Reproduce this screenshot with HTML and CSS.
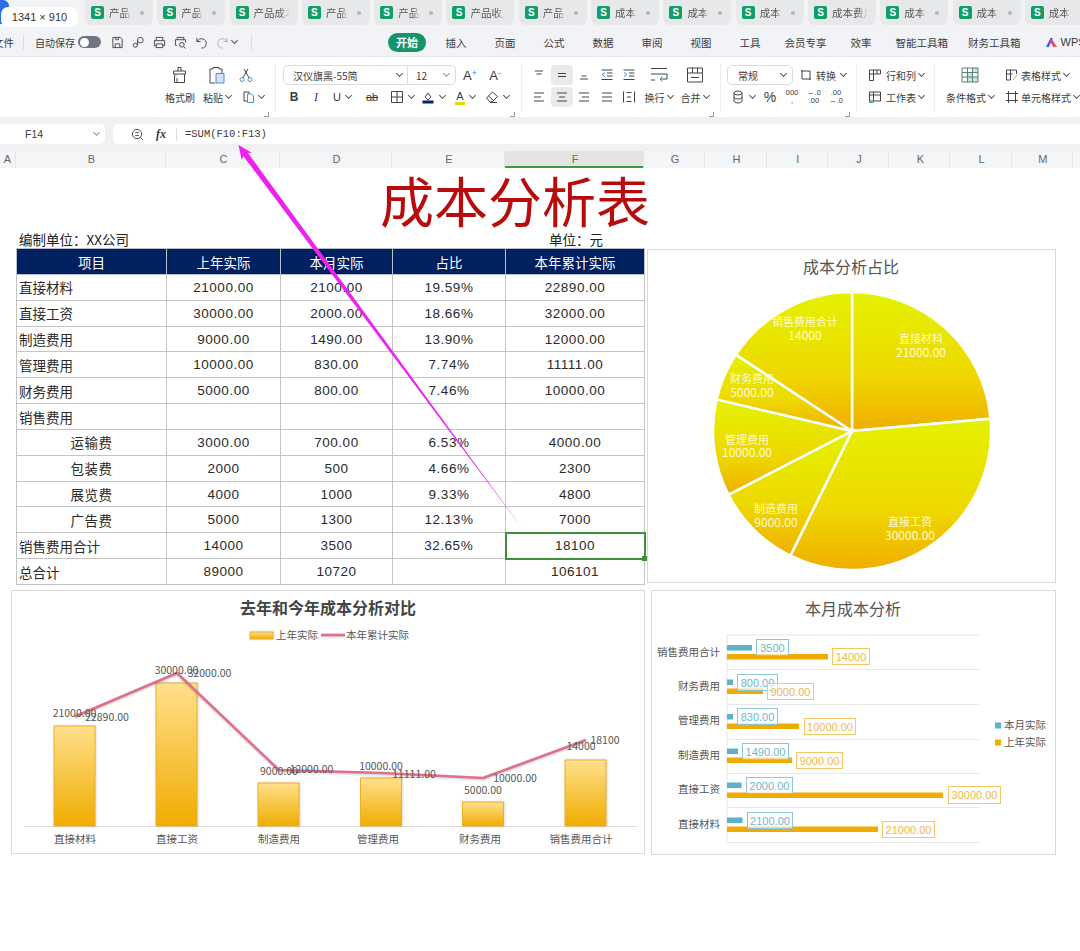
FILE: index.html
```html
<!DOCTYPE html>
<html lang="zh-CN">
<head>
  <meta charset="UTF-8"/>
  <title>成本分析表</title>
  <link rel="stylesheet" href="styles.css">
</head>
<body>
  <!-- TABS -->
  <div class="tabbar">
    <div class="chip">1341 × 910</div>
    <div class="tab"><b>S</b><span>产品成</span><i></i></div>
    <div class="tab"><b>S</b><span>产品成</span><i></i></div>
    <div class="tab"><b>S</b><span class="long">产品成本分</span></div>
    <div class="tab"><b>S</b><span>产品成</span><i></i></div>
    <div class="tab"><b>S</b><span>产品成</span><i></i></div>
    <div class="tab"><b>S</b><span class="long">产品收入分</span></div>
    <div class="tab"><b>S</b><span>产品成</span><i></i></div>
    <div class="tab"><b>S</b><span>成本分</span><i></i></div>
    <div class="tab"><b>S</b><span>成本分</span><i></i></div>
    <div class="tab"><b>S</b><span>成本分</span><i></i></div>
    <div class="tab"><b>S</b><span class="long">成本费用分</span></div>
    <div class="tab"><b>S</b><span>成本分</span><i></i></div>
    <div class="tab"><b>S</b><span>成本分</span><i></i></div>
    <div class="tab"><b>S</b><span>成本分</span><i></i></div>
  </div>

  <!-- MENU -->
  <div class="menubar">
    <div class="quick">
      <span class="file">文件</span>
      <span class="vline"></span>
      <span class="autosave">自动保存</span>
      <span class="toggle"></span>
      <svg class="ic qa" viewBox="0 0 14 14"><path d="M2 1.500h8l2 2v9H2zM4.500 12.500v-4h5v4M5 1.500v2.500h3v-2.500"/></svg>
      <svg class="ic qa" viewBox="0 0 14 14"><circle cx="9" cy="4.500" r="3"/><circle cx="3.500" cy="10" r="2.200"/><path d="M6 4.500v5.500"/></svg>
      <svg class="ic qa" viewBox="0 0 14 14"><path d="M3.500 5V1.500h7V5M3.500 10.500H1.500V5h11v5.500h-2M3.500 8.500h7v4h-7z"/></svg>
      <svg class="ic qa" viewBox="0 0 14 14"><path d="M3.500 4V1.500h7V4M3 10H1.500V4h11v3"/><circle cx="8.500" cy="9.500" r="2.500"/><path d="M10.500 11.500l2 2"/></svg>
      <svg class="ic qa" viewBox="0 0 14 14"><path d="M2 2v4h4M2.500 6A5 5 0 1 1 7 13"/></svg>
      <svg class="ic qa dim" viewBox="0 0 14 14"><path d="M12 2v4H8M11.500 6A5 5 0 1 0 7 13"/></svg>
      <span class="chev qa-chev"></span>
      <span class="vline last"></span>
    </div>
    <span class="pill">开始</span>
    <nav class="menu">
      <a>插入</a><a>页面</a><a>公式</a><a>数据</a><a>审阅</a><a>视图</a><a>工具</a>
      <a class="wide">会员专享</a><a>效率</a><a class="wide">智能工具箱</a><a class="wide">财务工具箱</a>
    </nav>
    <span class="vline end"></span>
    <svg class="wps" viewBox="0 0 14 12"><path d="M1 11L6 1h2.500L4 11z" fill="#3b5bf0"/><path d="M5 4l4 7h3.500L8 3z" fill="#e83e8c"/><path d="M9 11h4l-1.500-3z" fill="#f0653c"/></svg>
    <span class="wf">WPS AI</span>
  </div>

  <!-- RIBBON -->
  <div class="ribbon">
    <div class="group g-clip">
      <div class="big c1">
        <svg class="ic i20" viewBox="0 0 20 20"><path d="M8 6V2.500h3V6M3.500 6h12v3h-12zM4.500 9v8.500h10V9M7 17.500V13"/><path d="M4 11h3" stroke="#e8973c"/></svg>
      </div>
      <div class="big c2">
        <svg class="ic i20" viewBox="0 0 20 20"><path d="M3 4h3V2.500h6V4h3v4M8 18H3V4"/><path d="M9 8.500h8V18H9z" stroke="#4a90d9" fill="#cfe3f7"/></svg>
      </div>
      <div class="big c3">
        <svg class="ic i16 blue" viewBox="0 0 16 16"><circle cx="4" cy="12.500" r="2"/><circle cx="12" cy="12.500" r="2"/><path d="M5 10.800L10 2M11 10.800L6 2" stroke="#444"/></svg>
      </div>
      <div class="lbl c1">格式刷</div>
      <div class="lbl c2">粘贴<span class="chev"></span></div>
      <div class="lbl c3">
        <svg class="ic i14" viewBox="0 0 14 14"><path d="M2 2h5v9H2z"/><path d="M5.500 4h4l2 2v6.500h-6z" stroke="#4a90d9" fill="#fff"/></svg><span class="chev"></span>
      </div>
      <span class="launch"></span>
    </div>

    <div class="group g-font">
      <div class="r">
        <div class="sel font"><span>汉仪旗黑-55简</span><span class="chev"></span></div>
        <div class="sel size"><span>12</span><span class="chev light"></span></div>
        <span class="tool t-a">A<sup>+</sup></span>
        <span class="tool t-a">A<sup>-</sup></span>
      </div>
      <div class="r">
        <span class="tool w22 bold">B</span>
        <span class="tool w22 ital">I</span>
        <span class="tool w30 und">U<span class="chev"></span></span>
        <span class="tool w30 strike">ab</span>
        <span class="tool w30"><svg class="ic i14" viewBox="0 0 14 14"><path d="M1.500 1.500h11v11h-11zM7 1.500v11M1.500 7h11"/></svg><span class="chev"></span></span>
        <span class="tool w32"><svg class="i14" viewBox="0 0 14 14"><path class="ic-line" d="M4 7l3-4 3 4-3 3z"/><rect x="1.500" y="10.500" width="11" height="3" fill="#002060"/></svg><span class="chev"></span></span>
        <span class="tool w32"><span class="under-a">A</span><span class="chev"></span></span>
        <span class="tool w32"><svg class="ic i14" viewBox="0 0 14 14"><path d="M5 12L1.500 8 7.500 2l5 4.500L7 12zM3.500 6l5 4.500M5 12.500h7"/></svg><span class="chev"></span></span>
      </div>
      <span class="launch"></span>
    </div>

    <div class="group g-align">
      <div class="r">
        <span class="tool w225"><svg class="ic i14" viewBox="0 0 14 14"><path d="M3 3h8M4.500 6h5"/></svg></span>
        <span class="tool w225 on"><svg class="ic i14" viewBox="0 0 14 14"><path d="M3 5.500h8M3 8.500h8"/></svg></span>
        <span class="tool w225"><svg class="ic i14" viewBox="0 0 14 14"><path d="M4.500 8h5M3 11h8"/></svg></span>
        <span class="tool w225"><svg class="ic i14" viewBox="0 0 14 14"><path d="M1.500 2h11M7 5h5.500M7 8h5.500M1.500 11.500h11"/><path d="M5 4.500L2 6.500l3 2" stroke="#4a90d9"/></svg></span>
        <span class="tool w225"><svg class="ic i14" viewBox="0 0 14 14"><path d="M1.500 2h11M7 5h5.500M7 8h5.500M1.500 11.500h11"/><path d="M2 4.500l3 2-3 2" stroke="#4a90d9"/></svg></span>
        <span class="tool w36"><svg class="ic i20" viewBox="0 0 20 20"><path d="M2 3.500h16M2 9h16v5h-6M2 15h4"/><path d="M13.500 11.500L11 14l2.500 2.500" stroke="#2fa37a"/></svg></span>
        <span class="tool w36"><svg class="ic i20" viewBox="0 0 20 20"><path d="M2.500 3h15v14h-15zM7.500 3v5M12.500 3v5M2.500 8h15M6 12.500h8"/></svg></span>
      </div>
      <div class="r">
        <span class="tool w225"><svg class="ic i14" viewBox="0 0 14 14"><path d="M2 3h10M2 7h7M2 11h10"/></svg></span>
        <span class="tool w225 on"><svg class="ic i14" viewBox="0 0 14 14"><path d="M2 3h10M4 7h6M2 11h10"/></svg></span>
        <span class="tool w225"><svg class="ic i14" viewBox="0 0 14 14"><path d="M2 3h10M5 7h7M2 11h10"/></svg></span>
        <span class="tool w225"><svg class="ic i14" viewBox="0 0 14 14"><path d="M2 3h10M2 7h10M2 11h10"/></svg></span>
        <span class="tool w225"><svg class="ic i14" viewBox="0 0 14 14"><path d="M1.500 1.500v11M12.500 1.500v11M4.500 2.500h5M4.500 11.500h5M5 7h4"/></svg></span>
        <span class="tool w36 txt">换行<span class="chev"></span></span>
        <span class="tool w36 txt">合并<span class="chev"></span></span>
      </div>
      <span class="launch"></span>
    </div>

    <div class="group g-num">
      <div class="r">
        <div class="sel fmt"><span>常规</span><span class="chev"></span></div>
        <span class="tool conv"><svg class="ic i14" viewBox="0 0 14 14"><path d="M3 2v9h9M11 12V3H2"/></svg>转换<span class="chev"></span></span>
      </div>
      <div class="r">
        <span class="tool w32"><svg class="ic i14" viewBox="0 0 14 14"><ellipse cx="7" cy="3" rx="4" ry="2"/><path d="M3 3v8c0 2.600 8 2.600 8 0V3M3 7c0 2.600 8 2.600 8 0"/></svg><span class="chev"></span></span>
        <span class="tool w22 pct">%</span>
        <span class="tool w22 tiny">000<br>,</span>
        <span class="tool w22 tiny">←.0<br>.00</span>
        <span class="tool w22 tiny">.00<br>→.0</span>
      </div>
      <span class="launch"></span>
    </div>

    <div class="group g-rows">
      <div class="r"><svg class="ic i14" viewBox="0 0 14 14"><path d="M1.500 2h11v4h-7v6.500h-4zM1.500 6h4M5.500 2v4M9 2v4"/></svg><span class="t">行和列</span><span class="chev"></span></div>
      <div class="r"><svg class="ic i14" viewBox="0 0 14 14"><path d="M1.500 2h11v9h-11zM1.500 5h11M5.500 2v9"/><path d="M1.500 11v1.500h4" stroke="#2fa37a"/></svg><span class="t">工作表</span><span class="chev"></span></div>
    </div>

    <div class="group g-cond">
      <div class="big">
        <svg class="ic i20 slate" viewBox="0 0 20 20"><path d="M7.500 7.500h5V12h5.500v5H7.500zM12.500 3H18v4.500h-5.500z" fill="#bfeadb" stroke="none"/><path d="M2 3h16v14H2zM2 7.500h16M2 12h16M7.500 3v14M12.500 3v14"/></svg>
      </div>
      <div class="r"><svg class="ic i14" viewBox="0 0 14 14"><path d="M1.500 2h10v4M1.500 2v10h4M1.500 6h6M5.500 2v10"/><path d="M8 12l4-5" stroke="#e8973c"/></svg><span class="t">表格样式</span><span class="chev"></span></div>
      <div class="lbl">条件格式<span class="chev"></span></div>
      <div class="r"><svg class="ic i14" viewBox="0 0 14 14"><path d="M3.500 1v12M10.500 1v12M1 3.500h12M1 10.500h12"/></svg><span class="t">单元格样式</span><span class="chev"></span></div>
    </div>
  </div>

  <!-- FORMULA BAR -->
  <div class="formula">
    <div class="namebox"><span>F14</span><span class="chev light"></span></div>
    <div class="fbox">
      <svg class="ic zoomi" viewBox="0 0 14 14"><circle cx="6.500" cy="6.500" r="5"/><path d="M10 10l3 3M4.500 5h4M4.500 8h4"/></svg>
      <span class="fx">fx</span>
      <span class="fdiv"></span>
      <span class="ftext">=SUM(F10:F13)</span>
    </div>
  </div>

  <!-- COLUMN HEADERS -->
  <div class="cols">
    <span class="c-a">A</span><span class="c-b">B</span><span class="c-c">C</span><span class="c-d">D</span><span class="c-e">E</span><span class="c-f">F</span>
    <span class="c-n">G</span><span class="c-n">H</span><span class="c-n">I</span><span class="c-n">J</span><span class="c-n">K</span><span class="c-n">L</span><span class="c-n">M</span>
  </div>

  <!-- SHEET -->
  <div class="sheet">
    <h1>成本分析表</h1>
    <div class="meta"><span>编制单位：XX公司</span><span>单位：元</span></div>

    <div class="top-row">
      <table class="cost">
        <thead>
          <tr><th class="col-b">项目</th><th class="col-c">上年实际</th><th class="col-d">本月实际</th><th class="col-e">占比</th><th class="col-f">本年累计实际</th></tr>
        </thead>
        <tbody>
          <tr><td class="name">直接材料</td><td>21000.00</td><td>2100.00</td><td>19.59%</td><td>22890.00</td></tr>
          <tr><td class="name">直接工资</td><td>30000.00</td><td>2000.00</td><td>18.66%</td><td>32000.00</td></tr>
          <tr><td class="name">制造费用</td><td>9000.00</td><td>1490.00</td><td>13.90%</td><td>12000.00</td></tr>
          <tr><td class="name">管理费用</td><td>10000.00</td><td>830.00</td><td>7.74%</td><td>11111.00</td></tr>
          <tr><td class="name">财务费用</td><td>5000.00</td><td>800.00</td><td>7.46%</td><td>10000.00</td></tr>
          <tr><td class="name">销售费用</td><td></td><td></td><td></td><td></td></tr>
          <tr><td>运输费</td><td>3000.00</td><td>700.00</td><td>6.53%</td><td>4000.00</td></tr>
          <tr><td>包装费</td><td>2000</td><td>500</td><td>4.66%</td><td>2300</td></tr>
          <tr><td>展览费</td><td>4000</td><td>1000</td><td>9.33%</td><td>4800</td></tr>
          <tr><td>广告费</td><td>5000</td><td>1300</td><td>12.13%</td><td>7000</td></tr>
          <tr><td class="name">销售费用合计</td><td>14000</td><td>3500</td><td>32.65%</td><td class="active">18100</td></tr>
          <tr><td class="name">总合计</td><td>89000</td><td>10720</td><td></td><td>106101</td></tr>
        </tbody>
      </table>

      <div class="card pie-card">
        <svg viewBox="647 250 409 334" width="409" height="334">
          <defs>
            <linearGradient id="pieFill" x1="0" y1="0" x2="0" y2="1">
              <stop offset="0" stop-color="#e4f200"/><stop offset=".6" stop-color="#eed800"/><stop offset="1" stop-color="#f0ae00"/>
            </linearGradient>
            <linearGradient id="barFill" x1="0" y1="0" x2="0" y2="1">
              <stop offset="0" stop-color="#ffe08c"/><stop offset="1" stop-color="#f0ac00"/>
            </linearGradient>
          </defs>
          <text class="ctitle" x="851" y="268">成本分析占比</text>
          <g class="slices">
            <path d="M852 432L852 293A139 139 0 0 1 990.500 419.700Z"/>
            <path d="M852 432L990.500 419.700A139 139 0 0 1 790.400 556.600Z"/>
            <path d="M852 432L790.400 556.600A139 139 0 0 1 728.500 495.700Z"/>
            <path d="M852 432L728.500 495.700A139 139 0 0 1 716.600 400.400Z"/>
            <path d="M852 432L716.600 400.400A139 139 0 0 1 735.900 355.600Z"/>
            <path d="M852 432L735.900 355.600A139 139 0 0 1 852 293Z"/>
          </g>
          <g class="pie-lbl">
            <text x="921" y="339">直接材料</text><text class="num" x="921" y="352">21000.00</text>
            <text x="910" y="522">直接工资</text><text class="num" x="910" y="535">30000.00</text>
            <text x="776" y="509">制造费用</text><text class="num" x="776" y="522">9000.00</text>
            <text x="747" y="440">管理费用</text><text class="num" x="747" y="452">10000.00</text>
            <text x="752" y="379">财务费用</text><text class="num" x="752" y="392">5000.00</text>
            <text x="805" y="322">销售费用合计</text><text class="num" x="805" y="335">14000</text>
          </g>
        </svg>
      </div>
    </div>

    <div class="bottom-row">
      <div class="card bar-card">
        <svg viewBox="11 590 634 264" width="634" height="264">
          <text class="ctitle strong" x="328" y="608">去年和今年成本分析对比</text>
          <rect class="bar" x="250" y="632" width="23" height="7"/>
          <text class="note start" x="276" y="635">上年实际</text>
          <path class="trend" d="M321 635h24"/>
          <text class="note start" x="346" y="635">本年累计实际</text>

          <path class="axis" d="M24 826.500H637"/>
          <rect class="bar" x="54" y="726" width="41" height="100"/>
          <rect class="bar" x="156" y="683" width="41" height="143"/>
          <rect class="bar" x="258" y="783" width="41" height="43"/>
          <rect class="bar" x="360.500" y="778" width="41" height="48"/>
          <rect class="bar" x="462.500" y="802" width="41" height="24"/>
          <rect class="bar" x="565" y="760" width="41" height="66"/>
          <path class="trend" d="M75 716.500L177 673 279 770 382 773 483 778 586 740"/>

          <g class="note">
            <text x="74.500" y="713">21000.00</text><text x="176.500" y="670">30000.00</text><text x="279" y="771">9000.00</text>
            <text x="381" y="766">10000.00</text><text x="483" y="790">5000.00</text><text x="581" y="746">14000</text>
            <text x="107" y="717.500">22890.00</text><text x="209.500" y="673.500">32000.00</text><text x="311.500" y="769">12000.00</text>
            <text x="414" y="774">11111.00</text><text x="515" y="778.500">10000.00</text><text x="605" y="740">18100</text>
            <text x="75" y="839">直接材料</text><text x="177" y="839">直接工资</text><text x="279" y="839">制造费用</text>
            <text x="378" y="839">管理费用</text><text x="480" y="839">财务费用</text><text x="581" y="839">销售费用合计</text>
          </g>
        </svg>
      </div>

      <div class="card hbar-card">
        <svg viewBox="651 590 405 265" width="405" height="265">
          <text class="ctitle" x="853" y="609">本月成本分析</text>
          <path class="grid" d="M727 635H979M727 669.500H979M727 704.500H979M727 739.500H979M727 773.500H979M727 807.500H979M727 842.500H979M727 635V842.500"/>
          <g class="note end">
            <text x="720" y="652">销售费用合计</text><text x="720" y="686">财务费用</text><text x="720" y="720">管理费用</text>
            <text x="720" y="755">制造费用</text><text x="720" y="789">直接工资</text><text x="720" y="824">直接材料</text>
          </g>
          <g class="blue-bars">
            <rect x="727" y="645" width="25" height="5.500"/><rect x="727" y="679.500" width="6" height="5.500"/>
            <rect x="727" y="714" width="6" height="5.500"/><rect x="727" y="748.500" width="11" height="5.500"/>
            <rect x="727" y="782.500" width="14.500" height="5.500"/><rect x="727" y="817.500" width="15.500" height="5.500"/>
          </g>
          <g class="orange-bars">
            <rect x="727" y="654" width="101" height="5.500"/><rect x="727" y="688.500" width="36" height="5.500"/>
            <rect x="727" y="723.500" width="72" height="5.500"/><rect x="727" y="757.500" width="65" height="5.500"/>
            <rect x="727" y="792.500" width="216" height="5.500"/><rect x="727" y="826.500" width="151" height="5.500"/>
          </g>
          <g class="tag tag-b">
            <rect x="756.500" y="639.500" width="32" height="16"/><text x="772.500" y="647.500">3500</text>
            <rect x="737.500" y="674.500" width="40" height="16"/><text x="757.500" y="682.500">800.00</text>
            <rect x="737.500" y="708.500" width="40" height="16"/><text x="757.500" y="716.500">830.00</text>
            <rect x="742.500" y="743.500" width="46" height="16"/><text x="765.500" y="751.500">1490.00</text>
            <rect x="746.500" y="777.500" width="46" height="16"/><text x="769.500" y="785.500">2000.00</text>
            <rect x="747.500" y="812.500" width="45" height="16"/><text x="770" y="820.500">2100.00</text>
          </g>
          <g class="tag tag-o">
            <rect x="832.500" y="648.500" width="37" height="16"/><text x="851" y="656.500">14000</text>
            <rect x="767.500" y="683.500" width="46" height="16"/><text x="790.500" y="691.500">9000.00</text>
            <rect x="804.500" y="718.500" width="51" height="16"/><text x="830" y="726.500">10000.00</text>
            <rect x="796.500" y="752.500" width="46" height="16"/><text x="819.500" y="760.500">9000.00</text>
            <rect x="948.500" y="786.500" width="52" height="17"/><text x="974.500" y="795">30000.00</text>
            <rect x="882.500" y="821.500" width="52" height="16"/><text x="908.500" y="829.500">21000.00</text>
          </g>
          <rect class="blue-bars" x="995" y="722.500" width="6" height="6"/>
          <rect class="orange-bars" x="995" y="739.500" width="6" height="6"/>
          <text class="note start" x="1004" y="725.500">本月实际</text>
          <text class="note start" x="1004" y="742.500">上年实际</text>
        </svg>
      </div>
    </div>
  </div>

  <!-- annotation arrow drawn over the sheet -->
  <svg class="arrow" viewBox="0 0 1080 951" width="1080" height="951">
    <path d="M238.500 145L251.700 152.700 248 153 521.700 527.700 243.400 156.200 241.700 160Z"/>
  </svg>
</body>
</html>
```

FILE: styles.css
```css
* { box-sizing:border-box; }
html, body { margin:0; }
body {
  position:relative;
  width:1080px; height:951px; overflow:hidden;
  background:#fff; color:#3c3c3c;
  font-family:"Noto Sans CJK SC","Liberation Sans",sans-serif;
  font-size:10.5px;
}

/* tabs */
.tabbar { display:flex; height:28px; background:#f1f3f5; padding-left:85px; gap:4.3px; position:relative; overflow:hidden; }
.chip {
  position:absolute; left:1px; top:7px; width:77px; height:20px; z-index:1;
  background:#fff; border-radius:7px;
  font:11px/20px "Liberation Sans",sans-serif; color:#333; text-align:center;
}
.tabbar::before { content:""; position:absolute; left:0; top:0; width:9px; height:24px; background:#2a6fe8; border-radius:0 6px 0 0; }
.tab { flex:none; width:68px; height:25px; background:#e6e8ea; border-radius:0 0 7px 7px; display:flex; align-items:center; padding-left:6px; color:#555; }
.tab b { flex:none; width:13px; height:13px; background:#0f9d68; color:#fff; border-radius:2px; font:bold 10px/13px "Liberation Sans",sans-serif; text-align:center; }
.tab span { width:22px; margin-left:5px; white-space:nowrap; overflow:hidden; -webkit-mask-image:linear-gradient(90deg,#000 70%,transparent); mask-image:linear-gradient(90deg,#000 70%,transparent); }
.tab span.long { width:36px; }
.tab i { width:4px; height:4px; border-radius:50%; background:#b5b8bb; margin-left:9px; }

/* menu */
.menubar { display:flex; align-items:center; height:29px; background:#f1f3f6; border-bottom:1px solid #e6e7e9; }
.quick { display:flex; align-items:center; width:388px; flex:none; }
.file { margin-left:-7px; width:20px; white-space:nowrap; }
.vline { width:1px; height:15px; background:#dcdde0; }
.quick .vline { margin-left:10px; }
.autosave { margin-left:11px; width:40px; white-space:nowrap; font-size:10px; }
.toggle { position:relative; width:23px; height:12px; border-radius:6px; background:#6f7683; margin-left:3px; }
.toggle::after { content:""; position:absolute; left:1.500px; top:1.500px; width:9px; height:9px; background:#fff; border-radius:50%; }
.qa { width:13px; height:13px; margin-left:8px; }
.toggle + .qa { margin-left:10px; }
.dim { opacity:.4; }
.qa-chev { margin-left:11px; }
.quick .vline.last { margin-left:14px; }
.pill { flex:none; width:38px; height:19px; border-radius:10px; background:#15936a; color:#fff; font-weight:700; font-size:11px; line-height:19px; text-align:center; }
.menu { display:flex; margin-left:5.500px; flex:none; }
.menu a { padding:0 14px; }
.menu a.wide { padding:0 10px; }
.vline.end { margin-left:1px; }
.wps { width:13px; height:11px; margin-left:13px; flex:none; }
.wf { margin-left:3px; font:11px "Liberation Sans",sans-serif; white-space:nowrap; }

/* ribbon */
.ribbon { display:flex; height:60px; background:#fff; padding-top:6px; font-size:10px; }
.group { position:relative; flex:none; height:50px; border-right:1px solid #ececec; }
.r { display:flex; align-items:center; height:20px; }
.big { display:flex; justify-content:center; align-items:center; height:24px; }
.lbl { display:flex; justify-content:center; align-items:center; height:20px; white-space:nowrap; }
.g-clip { width:276px; display:grid; grid-template-columns:200px 34px 42px; grid-template-rows:24px 20px; }
.g-clip .c1 { grid-column:1; justify-content:flex-end; }
.g-clip .big.c1 { padding-right:10px; }
.g-clip .lbl.c1 { padding-right:5px; }
.g-clip .c2 { grid-column:2; }
.g-clip .c3 { grid-column:3; justify-content:flex-start; }
.g-clip .big.c3 { padding-left:4px; }
.g-clip .lbl.c3 { padding-left:8px; }
.g-font { width:246px; padding-left:7px; }
.g-font .r:first-child { height:24px; }
.g-align { width:199px; padding-left:6px; }
.g-align .r:first-child, .g-num .r:first-child { height:24px; }
.g-num { width:136px; padding-left:6px; }
.g-rows { width:78px; padding-left:11px; }
.g-rows .r:first-child { height:24px; }
.g-rows .t { margin-left:4px; white-space:nowrap; }
.g-cond { width:145px; border-right:none; display:grid; grid-template-columns:70px 75px; grid-template-rows:24px 20px; }
.g-cond .r { padding-left:0; height:auto; }
.g-cond .t { margin-left:2px; white-space:nowrap; }
.launch { position:absolute; right:6px; bottom:-4px; width:5px; height:5px; border-right:1px solid #999; border-bottom:1px solid #999; }

.sel { display:flex; align-items:center; justify-content:space-between; height:20px; border:1px solid #dcdcdc; white-space:nowrap; }
.sel.font { width:125px; padding:0 5px 0 9px; border-radius:5px 0 0 5px; }
.sel.size { width:48px; padding:0 6px 0 8px; border-left:none; border-radius:0 5px 5px 0; }
.sel.fmt { width:66px; padding:0 6px 0 10px; border-radius:5px; }
.tool { flex:none; display:flex; align-items:center; justify-content:center; height:20px; font-family:"Liberation Sans","Noto Sans CJK SC",sans-serif; }
.tool .chev { margin-left:5px; }
.t-a { width:24px; font-size:13px; margin-left:1px; }
.t-a:nth-child(3) { margin-left:2px; }
.t-a sup { font-size:9px; color:#4a90d9; line-height:0; margin-bottom:4px; }
.w22 { width:22px; }
.w225 { width:22.500px; }
.w30 { width:30px; }
.w32 { width:32px; }
.w36 { width:36px; }
.bold { font-weight:700; font-size:12px; }
.ital { font-style:italic; font-size:12px; font-family:"Liberation Serif",serif; }
.und { text-decoration:none; font-size:11px; }
.strike { font-size:11px; text-decoration:line-through; }
.under-a { font-size:11px; line-height:12px; border-bottom:3px solid #e8d800; padding:0 1px; }
.on { background:#e9eaec; border-radius:4px; height:20px; }
.txt { font-family:"Noto Sans CJK SC",sans-serif; white-space:nowrap; }
.txt .chev { margin-left:3px; }
.conv { margin-left:6px; font-family:"Noto Sans CJK SC",sans-serif; white-space:nowrap; }
.conv svg { margin-right:3px; }
.pct { font-size:14px; }
.tiny { font-size:7.500px; line-height:8px; text-align:center; }

.chev { display:inline-block; flex:none; width:5px; height:5px; margin:-3px 0 0 3px; border-right:1.200px solid #555; border-bottom:1.200px solid #555; transform:rotate(45deg); }
.chev.light { border-color:#999; }

.ic { fill:none; stroke:#444; stroke-width:1; }
.ic-line { fill:none; stroke:#444; }
.i20 { width:20px; height:20px; flex:none; }
.i16 { width:16px; height:16px; flex:none; }
.i14 { width:14px; height:14px; flex:none; }
.blue { stroke:#4a90d9; }
.slate { stroke:#5f7f76; }

/* formula bar */
.formula { display:flex; align-items:stretch; height:34px; padding:7px 0 7px; background:#f0f1f3; gap:8px; }
.namebox { width:105px; background:#fff; border-radius:0 5px 5px 0; display:flex; align-items:center; justify-content:space-between; padding:0 6px 0 25px; font:10.500px "Liberation Sans",sans-serif; }
.fbox { flex:1; display:flex; align-items:center; background:#fff; border-radius:5px 0 0 5px; }
.zoomi { width:13px; height:13px; margin-left:18px; }
.fx { margin-left:12px; width:16px; font:italic bold 12px "Liberation Serif",serif; }
.fdiv { width:1px; height:13px; background:#ddd; margin-left:4px; }
.ftext { margin-left:8px; font:10.500px "Liberation Mono",monospace; }

/* column headers */
.cols { display:flex; height:17px; background:#f4f5f6; color:#666; font:11px/17px "Liberation Sans",sans-serif; text-align:center; }
.cols span { flex:none; padding-left:2px; border-right:1px solid #e4e5e6; }
.cols .c-a { padding-left:0; }
.c-a { width:16px; } .c-b { width:150px; } .c-c { width:114px; } .c-d { width:112px; } .c-e { width:113px; }
.c-f { width:139px; background:#e2e5e2; box-shadow:inset 0 -2px 0 #3f9a3f; color:#2f8a3f; }
.c-n { width:61.300px; }

/* sheet */
.sheet { padding-top:2px; }
h1 { margin:0; height:61px; padding-left:380px; color:#b80c0c; font-size:54px; font-weight:400; line-height:60px; white-space:nowrap; }
.meta { display:flex; justify-content:space-between; width:584px; margin-left:19px; height:17px; font-size:13.500px; line-height:17px; color:#222; }
.top-row { display:flex; gap:1px; margin-left:16px; align-items:flex-start; }
.bottom-row { display:flex; gap:6px; margin:5px 0 0 11px; }

.cost { width:628px; table-layout:fixed; border-collapse:collapse; flex:none; color:#2a2a2a; font:13.500px "Liberation Sans","Noto Sans CJK SC",sans-serif; text-align:center; }
.col-b { width:150px; } .col-c { width:114px; } .col-d { width:112px; } .col-e { width:113px; } .col-f { width:139px; }
.cost th { height:26px; background:#002060; color:#fff; font-weight:400; border:1px solid #b8bfcc; }
.cost td { height:25.840px; padding:0; border:1px solid #c4c4c4; letter-spacing:.5px; }
.cost td.name { text-align:left; padding-left:2px; letter-spacing:0; }
.cost td.active { position:relative; border:2px solid #3f8f3a; }
.cost td.active::after { content:""; position:absolute; right:-3px; bottom:-3px; width:5px; height:5px; background:#3f8f3a; }

.card { flex:none; background:#fff; border:1px solid #d9d9d9; overflow:hidden; }
.card svg { display:block; margin:-1px; }
.pie-card { margin-top:1px; width:409px; height:334px; }
.bar-card { width:634px; height:264px; }
.hbar-card { width:405px; height:265px; }

/* chart parts */
svg text { dominant-baseline:central; text-anchor:middle; }
.ctitle { font-size:16px; fill:#555; transform:translateY(-1px); }
.ctitle.strong { font-weight:700; fill:#444; }
.slices path { fill:url(#pieFill); stroke:#fff; stroke-width:2.500px; }
.pie-lbl text { font-size:11px; fill:#fffbd0; }
.pie-lbl .num { font-size:12px; }
.note text, text.note { font-size:10.500px; fill:#555; transform:translateY(-1px); }
.note.start, .note .start { text-anchor:start; }
.note.end text { text-anchor:end; }
.bar { fill:url(#barFill); stroke:#e9b030; stroke-width:1px; filter:drop-shadow(1px 0 1px rgba(0,0,0,.15)); }
.trend { fill:none; stroke:#e0708a; stroke-width:2.600px; stroke-linejoin:round; filter:drop-shadow(0 1px 1px rgba(0,0,0,.2)); }
.axis { fill:none; stroke:#dcdcdc; }
.grid { fill:none; stroke:#e6e6e6; }
.blue-bars { fill:#5fb0c9; }
.orange-bars { fill:#f0ab00; }
.tag rect { fill:#fff; fill-opacity:.6; }
.tag text { font-size:11px; font-family:"Liberation Sans",sans-serif; }
.tag-b rect { stroke:#8cc5d6; }
.tag-b text { fill:#6fb7cd; }
.tag-o rect { stroke:#f2c766; }
.tag-o text { fill:#eeb84a; }

.arrow { position:absolute; left:0; top:0; pointer-events:none; }
.arrow path { fill:#ee22ee; }
```
